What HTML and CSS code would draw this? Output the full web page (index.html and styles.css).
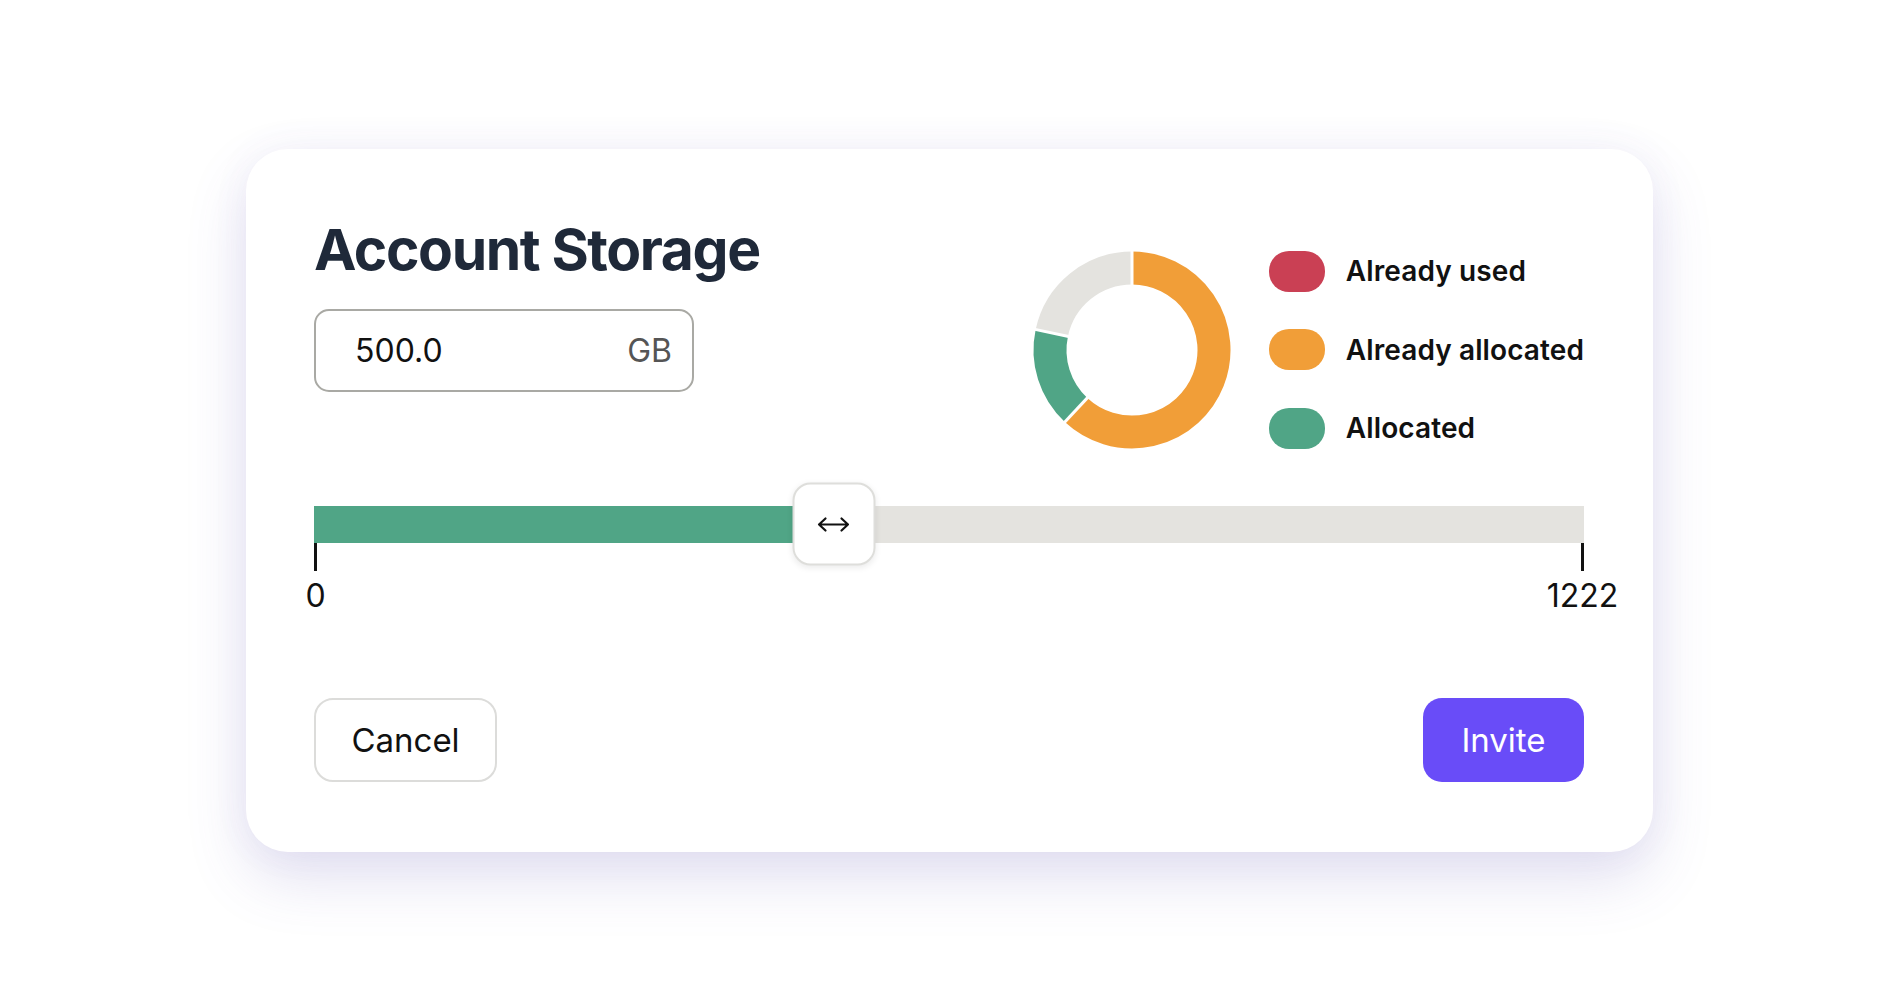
FILE: index.html
```html
<!DOCTYPE html>
<html lang="en">
<head>
<meta charset="utf-8">
<title>Account Storage</title>
<link rel="stylesheet" href="styles.css">
</head>
<body>
<div class="card">
  <div class="top-row">
    <div class="left-col">
      <h1 class="title">Account Storage</h1>
      <div class="amount-input">
        <span class="amount-value">500.0</span>
        <span class="amount-unit">GB</span>
      </div>
    </div>
    <div class="chart-block">
      <svg class="donut" width="198" height="198" viewBox="0 0 198 198">
        <path d="M99 17 A82 82 0 1 1 43.08 158.97" fill="none" stroke="#f19e38" stroke-width="33"/>
        <path d="M43.08 158.97 A82 82 0 0 1 18.79 81.95" fill="none" stroke="#50a586" stroke-width="33"/>
        <path d="M18.79 81.95 A82 82 0 0 1 99 17" fill="none" stroke="#e4e3df" stroke-width="33"/>
        <line x1="99" y1="36" x2="99" y2="0" stroke="#ffffff" stroke-width="3"/>
        <line x1="58.08" y1="142.88" x2="28.07" y2="175.06" stroke="#ffffff" stroke-width="3"/>
        <line x1="40.31" y1="86.53" x2="-2.73" y2="77.38" stroke="#ffffff" stroke-width="3"/>
      </svg>
      <ul class="legend">
        <li class="legend-item"><span class="swatch swatch-used"></span><span class="legend-label">Already used</span></li>
        <li class="legend-item"><span class="swatch swatch-allocated-before"></span><span class="legend-label">Already allocated</span></li>
        <li class="legend-item"><span class="swatch swatch-allocated"></span><span class="legend-label">Allocated</span></li>
      </ul>
    </div>
  </div>

  <div class="slider">
    <div class="slider-fill" style="width: 40.92%"></div>
    <div class="slider-handle" style="left: 40.92%">
      <svg width="34" height="16" viewBox="0 0 34 16">
        <path d="M2.5 8 H31.5 M9 2 L2.5 8 L9 14 M25 2 L31.5 8 L25 14" fill="none" stroke="#111111" stroke-width="2.2" stroke-linecap="round" stroke-linejoin="round"/>
      </svg>
    </div>
  </div>
  <div class="scale">
    <div class="mark"><span class="tick"></span><span class="mark-label">0</span></div>
    <div class="mark"><span class="tick"></span><span class="mark-label">1222</span></div>
  </div>

  <div class="actions">
    <button class="btn btn-cancel" type="button">Cancel</button>
    <button class="btn btn-invite" type="button">Invite</button>
  </div>
</div>
</body>
</html>
```

FILE: styles.css
```css
* {
  box-sizing: border-box;
}

html, body {
  margin: 0;
  padding: 0;
  background: #ffffff;
}

body {
  min-height: 100vh;
  display: flex;
  align-items: center;
  justify-content: center;
  font-family: "Inter", "Noto Sans", "Liberation Sans", sans-serif;
  color: #111111;
}

.card {
  width: 1407px;
  height: 703px;
  padding: 66px 69px 70px 68px;
  background: #ffffff;
  border-radius: 42px;
  box-shadow: 0 26px 60px rgba(92, 84, 180, 0.18), 0 0 40px rgba(92, 84, 180, 0.05);
  display: flex;
  flex-direction: column;
}

.top-row {
  display: flex;
  justify-content: space-between;
  align-items: flex-start;
  height: 234px;
}

.left-col {
  display: flex;
  flex-direction: column;
  align-items: flex-start;
}

.title {
  margin: 0;
  font-size: 57px;
  line-height: 70px;
  font-weight: 700;
  color: #1f2939;
  letter-spacing: -1.4px;
}

.amount-input {
  margin-top: 24px;
  width: 380px;
  height: 83px;
  border: 2px solid #a9a9a4;
  border-radius: 15px;
  display: flex;
  align-items: center;
  justify-content: space-between;
  padding: 0 20px 0 39px;
  font-size: 32px;
}

.amount-value {
  color: #111111;
}

.amount-unit {
  color: #555555;
}

.chart-block {
  margin-top: 36px;
  display: flex;
  align-items: flex-start;
}

.donut {
  display: block;
  overflow: visible;
}

.legend {
  list-style: none;
  margin: 0 0 0 38px;
  padding: 0;
  display: flex;
  flex-direction: column;
  gap: 37.5px;
}

.legend-item {
  display: flex;
  align-items: center;
  height: 41px;
}

.swatch {
  width: 56px;
  height: 41px;
  border-radius: 20px;
  flex: none;
}

.swatch-used {
  background: #ca4054;
}

.swatch-allocated-before {
  background: #f19e38;
}

.swatch-allocated {
  background: #50a586;
}

.legend-label {
  margin-left: 21px;
  font-size: 28px;
  font-weight: 600;
  letter-spacing: 0.1px;
  color: #111111;
  white-space: nowrap;
}

.slider {
  position: relative;
  margin-top: 57px;
  height: 37px;
  background: #e4e3df;
}

.slider-fill {
  height: 100%;
  background: #50a586;
}

.slider-handle {
  position: absolute;
  top: 50%;
  width: 83px;
  height: 83px;
  transform: translate(-50%, -50%);
  background: #ffffff;
  border: 2px solid #dededb;
  border-radius: 18px;
  box-shadow: 0 2px 6px rgba(0, 0, 0, 0.08);
  display: flex;
  align-items: center;
  justify-content: center;
}

.scale {
  display: flex;
  justify-content: space-between;
}

.mark {
  width: 3px;
  display: flex;
  flex-direction: column;
  align-items: center;
}

.tick {
  display: block;
  width: 3px;
  height: 28px;
  background: #111111;
}

.mark-label {
  margin-top: 5px;
  font-size: 32px;
  line-height: 39px;
  color: #111111;
  white-space: nowrap;
}

.actions {
  margin-top: 83px;
  display: flex;
  justify-content: space-between;
  align-items: center;
}

.btn {
  font-family: inherit;
  font-size: 33px;
  font-weight: 400;
  height: 84px;
  border-radius: 19px;
  cursor: pointer;
}

.btn-cancel {
  width: 183px;
  background: #ffffff;
  border: 2px solid #dcdcda;
  color: #111111;
}

.btn-invite {
  width: 161px;
  background: #694cf8;
  border: none;
  color: #ffffff;
}
```
